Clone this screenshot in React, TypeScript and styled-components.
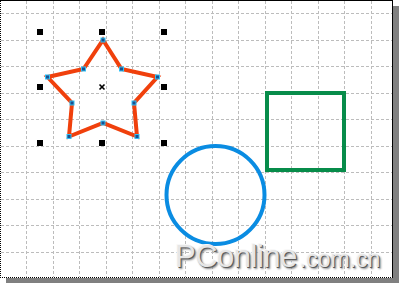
import styled, { createGlobalStyle } from 'styled-components';

const GlobalStyle = createGlobalStyle`
  html, body {
    margin: 0;
    padding: 0;
    background: #ffffff;
    overflow: hidden;
  }
`;

const Page = styled.div`
  width: 399px;
  height: 283px;
  background: #ffffff;
`;

const Frame = styled.div`
  position: relative;
  width: 391px;
  height: 276px;
  border-top: 1px solid #000;
  border-right: 1px solid #000;
  border-left: 1px dotted #000;
  border-bottom: 1px dotted #000;
  background: #ffffff;
  box-shadow: 6px 6px 0 #808080;
`;

const Board = styled.svg`
  display: block;
`;

const Watermark = styled.div`
  position: absolute;
  left: 174px;
  top: 240px;
  display: flex;
  align-items: baseline;
  font-family: 'Liberation Sans', Arial, sans-serif;
  color: #e6e6e6;
  text-shadow: 1px 1px 0 #5a5a5a, 2px 2px 2px #8a8a8a, -1px -1px 0 #f8f8f8;
  white-space: nowrap;
  line-height: 1;
`;

const Brand = styled.span`
  font-size: 31px;
  letter-spacing: -0.5px;
`;

const Domain = styled.span`
  font-size: 23px;
  margin-left: 3px;
`;

const GRID_X = Array.from({ length: 14 }, (_, i) => Math.round(26 + i * 26.5));
const GRID_Y = Array.from({ length: 10 }, (_, i) => Math.round(13 + i * 26.5));

const HANDLES = [
  [40, 32], [102, 32], [164, 32],
  [40, 87], [164, 87],
  [40, 143], [102, 143], [164, 143],
];

const STAR = [
  [103, 40], [121.5, 69], [157.5, 77], [134, 103], [137, 136.5],
  [103, 123], [69, 136.5], [72, 103], [47.5, 77], [83.5, 69],
];

export default function App() {
  const starPoints = STAR.map(([x, y]) => `${x},${y}`).join(' ');

  return (
    <Page>
      <GlobalStyle />
      <Frame>
        <Board width={391} height={276} viewBox="1 1 391 276">
          <g stroke="#bcbcbc" strokeWidth={1} strokeDasharray="3 2">
            {GRID_X.map((x) => (
              <line key={`v${x}`} x1={x + 0.5} y1={1} x2={x + 0.5} y2={277} />
            ))}
            {GRID_Y.map((y) => (
              <line key={`h${y}`} x1={1} y1={y + 0.5} x2={392} y2={y + 0.5} />
            ))}
          </g>

          {HANDLES.map(([x, y]) => (
            <rect key={`${x}-${y}`} x={x - 3} y={y - 3} width={6} height={6} fill="#000" />
          ))}

          <polygon
            points={starPoints}
            fill="none"
            stroke="#f0400c"
            strokeWidth={4}
            strokeLinejoin="miter"
          />
          {STAR.map(([x, y]) => (
            <rect
              key={`n${x}-${y}`}
              x={x - 2}
              y={y - 2}
              width={4}
              height={4}
              fill="#1a5090"
              stroke="#30c0f4"
              strokeWidth={1}
            />
          ))}

          <g stroke="#000" strokeWidth={1.6}>
            <line x1={99.5} y1={84.5} x2={104.5} y2={89.5} />
            <line x1={104.5} y1={84.5} x2={99.5} y2={89.5} />
          </g>

          <rect x={267} y={93} width={77} height={77} fill="none" stroke="#078c4a" strokeWidth={4} />

          <circle cx={215.5} cy={195} r={49} fill="none" stroke="#0a8ce2" strokeWidth={4} />
        </Board>

        <Watermark>
          <Brand>PConline</Brand>
          <Domain>.com.cn</Domain>
        </Watermark>
      </Frame>
    </Page>
  );
}
